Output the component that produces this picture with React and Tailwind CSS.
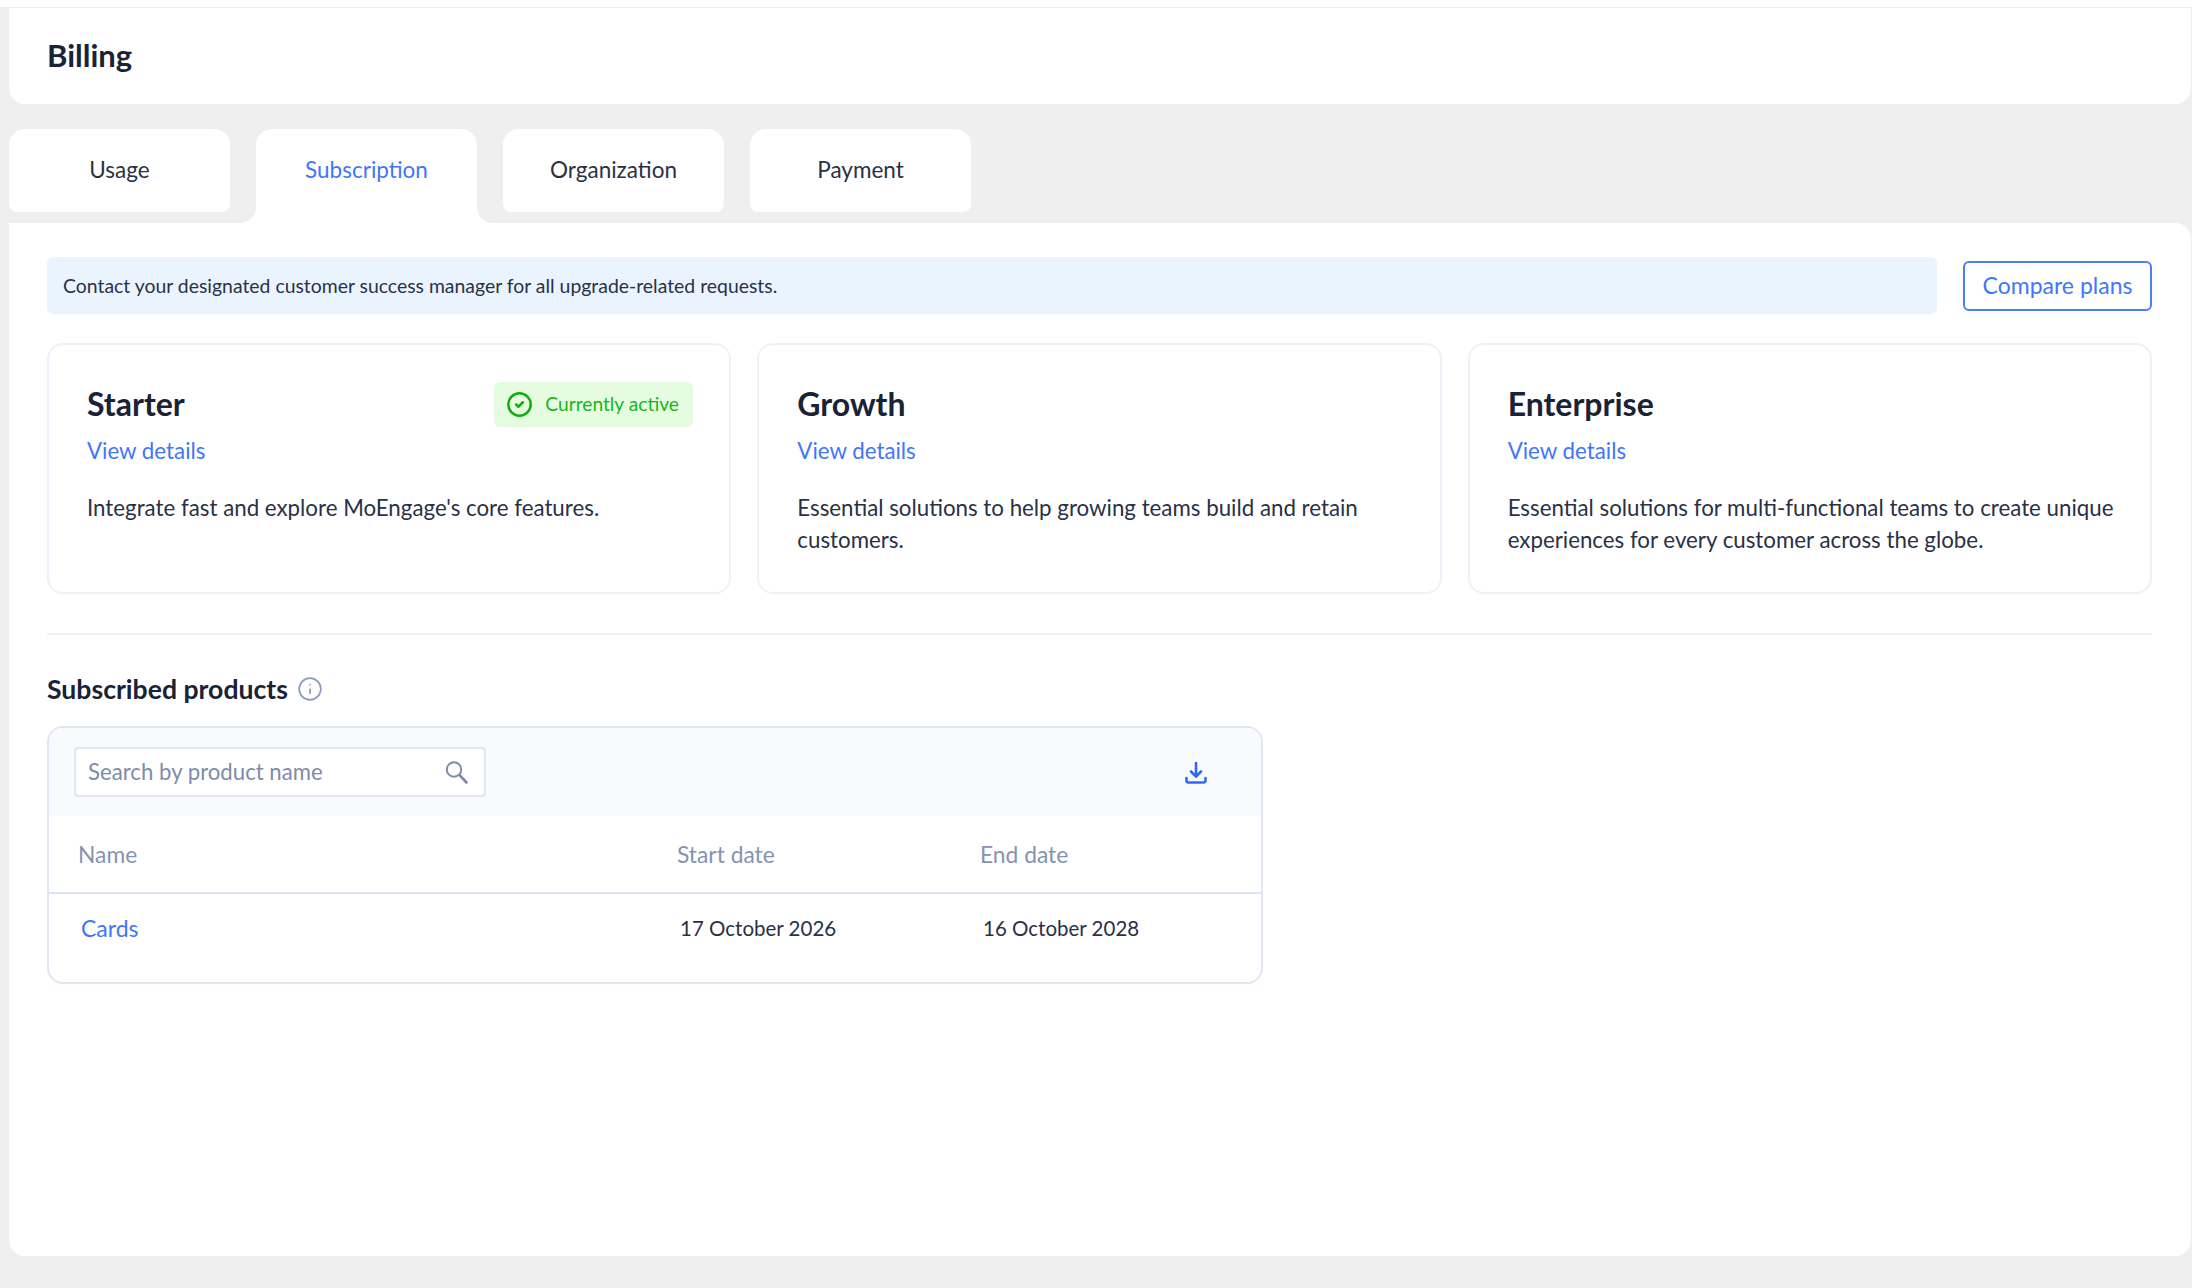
import { CircleCheck, Info } from "lucide-react";

const tabs = ["Usage", "Subscription", "Organization", "Payment"];

const plans = [
  {
    name: "Starter",
    active: true,
    description: "Integrate fast and explore MoEngage's core features.",
  },
  {
    name: "Growth",
    description: "Essential solutions to help growing teams build and retain customers.",
  },
  {
    name: "Enterprise",
    description:
      "Essential solutions for multi-functional teams to create unique experiences for every customer across the globe.",
  },
];

function DownloadIcon() {
  return (
    <svg width="24" height="24" viewBox="0 0 24 24" fill="none" stroke="#2f69f5" strokeWidth="2.6" strokeLinecap="round" strokeLinejoin="round" className="mt-[2px]">
      <path d="M12 2v13" />
      <path d="M7 10.5l5 5 5-5" />
      <path d="M2.5 17v2.5a2 2 0 0 0 2 2h15a2 2 0 0 0 2-2V17" />
    </svg>
  );
}

function SearchIcon() {
  return (
    <svg width="24" height="24" viewBox="0 0 24 24" fill="none" stroke="#7d8cab" strokeLinecap="round">
      <circle cx="10" cy="9.5" r="7.2" strokeWidth="2" />
      <path d="M15.5 15l7 7.5" strokeWidth="2.6" />
    </svg>
  );
}

function PlanCard({ plan }) {
  return (
    <div className="h-[251px] rounded-[16px] border-2 border-[#edf1fa] pl-[38px] pr-[28px] pt-[36px]">
      <div className="mr-[8px] flex h-[46px] items-center justify-between">
        <h2 className="text-[32px] leading-[46px] font-bold text-[#1a2238]">{plan.name}</h2>
        {plan.active && (
          <span className="flex h-[45px] w-[199px] items-center gap-[12px] rounded-[6px] bg-[#e6fce0] pl-[12px] text-[19.2px] text-[#16b816]">
            <CircleCheck size={27} strokeWidth={2.2} className="text-[#0fae0f]" />
            Currently active
          </span>
        )}
      </div>
      <a className="mt-[10px] block text-[22.3px] leading-[28px] text-[#3f76fb]">View details</a>
      <p className="mt-[27px] text-[22.3px] leading-[32px] text-[#2a3146]">{plan.description}</p>
    </div>
  );
}

export default function App() {
  return (
    <div className="flex h-[1288px] flex-col bg-[#efefef] font-['Lato',sans-serif]">
      <div className="h-[8px] shrink-0 border-b border-[#eaeef8] bg-white" />

      <div className="ml-[9px] mr-[1px] flex h-[96px] shrink-0 items-center rounded-b-[16px] bg-white pb-[2px] pl-[38px]">
        <h1 className="text-[31px] font-bold text-[#1a2238]">Billing</h1>
      </div>

      <div className="mt-[25px] ml-[9px] flex h-[94px] shrink-0 items-start gap-[26px]">
        {tabs.map((tab) =>
          tab === "Subscription" ? (
            <div key={tab} className="relative flex h-[94px] w-[221px] justify-center rounded-t-[16px] bg-white pt-[26px] text-[22.5px] leading-[29px] text-[#3f76fb]">
              {tab}
              <span className="absolute bottom-0 left-[-16px] h-[16px] w-[16px] bg-white">
                <span className="block h-full w-full rounded-br-[16px] bg-[#efefef]" />
              </span>
              <span className="absolute right-[-16px] bottom-0 h-[16px] w-[16px] bg-white">
                <span className="block h-full w-full rounded-bl-[16px] bg-[#efefef]" />
              </span>
            </div>
          ) : (
            <div key={tab} className="flex h-[83px] w-[221px] items-center justify-center rounded-t-[16px] rounded-b-[8px] bg-white pb-[2px] text-[22.5px] text-[#2a3146]">
              {tab}
            </div>
          )
        )}
      </div>

      <div className="ml-[9px] mr-[1px] h-[1033px] shrink-0 rounded-tr-[16px] rounded-b-[16px] bg-white pr-[39px] pl-[38px] pt-[34px]">
        <div className="flex items-center gap-[26px]">
          <div className="flex h-[57px] flex-1 items-center rounded-[6px] bg-[#eaf4ff] pl-[16px] text-[19.4px] text-[#2a3146]">
            Contact your designated customer success manager for all upgrade-related requests.
          </div>
          <button className="h-[50px] w-[189px] rounded-[6px] border-2 border-[#4b7ff7] text-[23px] text-[#3f76fb]">
            Compare plans
          </button>
        </div>

        <div className="mt-[29px] grid grid-cols-3 gap-[26px]">
          {plans.map((plan) => (
            <PlanCard key={plan.name} plan={plan} />
          ))}
        </div>

        <div className="mt-[39px] border-t-2 border-[#f0f2f8]" />

        <div className="mt-[36px] flex items-center gap-[9px]">
          <h3 className="text-[26.6px] leading-[36px] font-bold text-[#1a2238]">Subscribed products</h3>
          <Info size={26} strokeWidth={1.6} className="text-[#8a9bbd]" />
        </div>

        <div className="mt-[19px] h-[258px] w-[1216px] overflow-hidden rounded-[16px] border-2 border-[#e1e6f3]">
          <div className="flex h-[88px] items-center justify-between bg-[#f9fafe] pr-[53px] pl-[25px]">
            <div className="flex h-[50px] w-[412px] items-center justify-between rounded-[4px] border-2 border-[#e1e6f3] bg-white pr-[16px] pl-[12px] text-[22.2px] text-[#7d8cab]">
              Search by product name
              <SearchIcon />
            </div>
            <DownloadIcon />
          </div>
          <div className="flex h-[78px] items-center border-b-2 border-[#dfe3f1] text-[22.8px] text-[#8493b2]">
            <span className="w-[628px] pl-[29px]">Name</span>
            <span className="w-[303px]">Start date</span>
            <span>End date</span>
          </div>
          <div className="flex h-[69px] items-center text-[20.5px] text-[#2a3146]">
            <a className="w-[631px] pl-[32px] text-[23px] text-[#3f76fb]">Cards</a>
            <span className="w-[303px]">17 October 2026</span>
            <span>16 October 2028</span>
          </div>
        </div>
      </div>
    </div>
  );
}
